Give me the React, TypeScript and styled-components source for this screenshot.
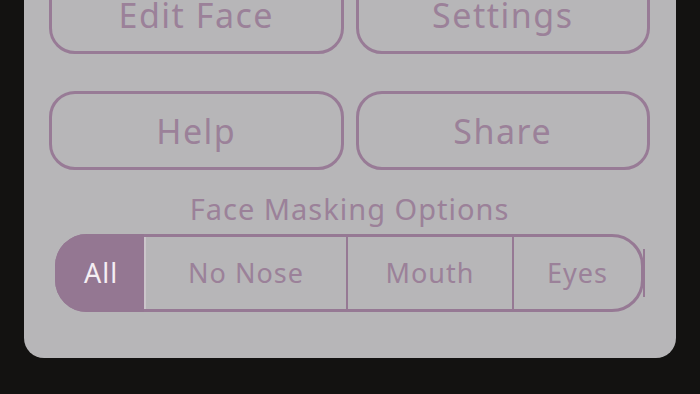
import styled, { createGlobalStyle } from "styled-components";

const GlobalStyle = createGlobalStyle`
  html, body {
    margin: 0;
    padding: 0;
    background: #131211;
    overflow: hidden;
  }
  body {
    font-family: "Noto Sans", "DejaVu Sans", sans-serif;
  }
`;

const Screen = styled.div`
  width: 700px;
  height: 394px;
  overflow: hidden;
  background: #131211;
`;

const Panel = styled.section`
  box-sizing: border-box;
  width: 652px;
  margin: -45px 0 0 24px;
  padding: 20px 26px 46px 25px;
  background: #b7b6b8;
  border-radius: 20px;
  display: flex;
  flex-direction: column;
`;

const ButtonGrid = styled.div`
  display: grid;
  grid-template-columns: 1fr 1fr;
  column-gap: 12px;
  row-gap: 37px;
`;

const MenuButton = styled.button`
  box-sizing: border-box;
  height: 79px;
  border: 3px solid #987b96;
  border-radius: 26px;
  background: transparent;
  color: #9b8199;
  font-family: inherit;
  font-size: 34px;
  letter-spacing: 1.5px;
  padding: 0;
`;

const SectionLabel = styled.div`
  margin-top: 17px;
  height: 47px;
  text-align: center;
  color: #9b8199;
  font-size: 29px;
  letter-spacing: 1px;
  line-height: 44px;
`;

const Segmented = styled.div`
  position: relative;
  box-sizing: border-box;
  height: 78px;
  margin: 0 6px 0 6px;
  border: 3px solid #967994;
  border-radius: 32px;
  display: flex;

  &::after {
    content: "";
    position: absolute;
    right: -4px;
    top: 12px;
    bottom: 12px;
    width: 2px;
    background: #967994;
  }
`;

const Segment = styled.div<{ $width: number; $active?: boolean; $first?: boolean; $last?: boolean }>`
  box-sizing: border-box;
  flex: 0 0 ${(p) => p.$width}px;
  display: flex;
  align-items: center;
  justify-content: center;
  margin: ${(p) => (p.$first ? "-3px 0 -3px -3px" : "0")};
  padding: ${(p) => (p.$first ? "0 0 2px 3px" : "0 0 2px 0")};
  font-size: 27px;
  letter-spacing: 1px;
  color: ${(p) => (p.$active ? "#f4eef3" : "#9b8199")};
  background: ${(p) => (p.$active ? "#947792" : "transparent")};
  border-left: ${(p) => (p.$first ? "none" : "2px solid #967994")};
  border-radius: ${(p) =>
    p.$first ? "32px 0 0 32px" : p.$last ? "0 29px 29px 0" : "0"};

  &:nth-child(2) {
    border-left-color: #cbc5ca;
  }
`;

const segments = [
  { label: "All", width: 89 },
  { label: "No Nose", width: 202 },
  { label: "Mouth", width: 166 },
  { label: "Eyes", width: 129 },
];

export default function App() {
  return (
    <Screen>
      <GlobalStyle />
      <Panel>
        <ButtonGrid>
          <MenuButton>Edit Face</MenuButton>
          <MenuButton>Settings</MenuButton>
          <MenuButton>Help</MenuButton>
          <MenuButton>Share</MenuButton>
        </ButtonGrid>
        <SectionLabel>Face Masking Options</SectionLabel>
        <Segmented>
          {segments.map((s, i) => (
            <Segment
              key={s.label}
              $width={s.width}
              $active={i === 0}
              $first={i === 0}
              $last={i === segments.length - 1}
            >
              {s.label}
            </Segment>
          ))}
        </Segmented>
      </Panel>
    </Screen>
  );
}
